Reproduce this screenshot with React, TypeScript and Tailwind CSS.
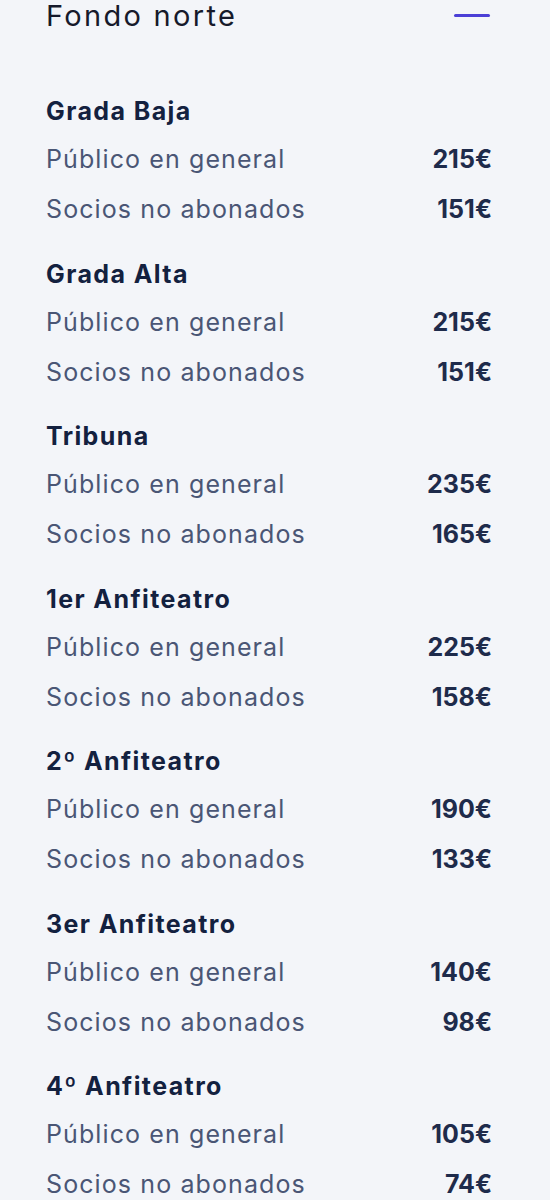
const sections = [
  { name: "Grada Baja", general: "215€", socios: "151€" },
  { name: "Grada Alta", general: "215€", socios: "151€" },
  { name: "Tribuna", general: "235€", socios: "165€" },
  { name: "1er Anfiteatro", general: "225€", socios: "158€" },
  { name: "2º Anfiteatro", general: "190€", socios: "133€" },
  { name: "3er Anfiteatro", general: "140€", socios: "98€" },
  { name: "4º Anfiteatro", general: "105€", socios: "74€" },
];

const Row = ({ label, price }: { label: string; price: string }) => (
  <div className="flex h-[50px] items-center justify-between">
    <span className="text-[25px] tracking-[1.1px] text-[#4a5675]">{label}</span>
    <span className="text-[25px] font-bold text-[#1e2b4b]">{price}</span>
  </div>
);

export default function App() {
  return (
    <div
      className="min-h-screen w-[550px] bg-[#f3f5f9] pl-[46px] pr-[58px]"
      style={{ fontFamily: "Inter, 'Noto Sans', sans-serif" }}
    >
      <div className="flex h-[31px] items-center justify-between">
        <h2 className="text-[29px] leading-[31px] tracking-[2.3px] text-[#161a2b]">Fondo norte</h2>
        <div className="mr-[2px] h-[3.5px] w-[36px] rounded-full bg-[#4b3fd6]" />
      </div>

      <div className="mt-[58px] flex flex-col gap-[16.5px]">
        {sections.map((s) => (
          <div key={s.name} className="flex flex-col">
            <div className="flex h-[46px] items-center">
              <h3 className="text-[25px] font-bold tracking-[1.4px] text-[#13213f]">{s.name}</h3>
            </div>
            <Row label="Público en general" price={s.general} />
            <Row label="Socios no abonados" price={s.socios} />
          </div>
        ))}
      </div>
    </div>
  );
}
